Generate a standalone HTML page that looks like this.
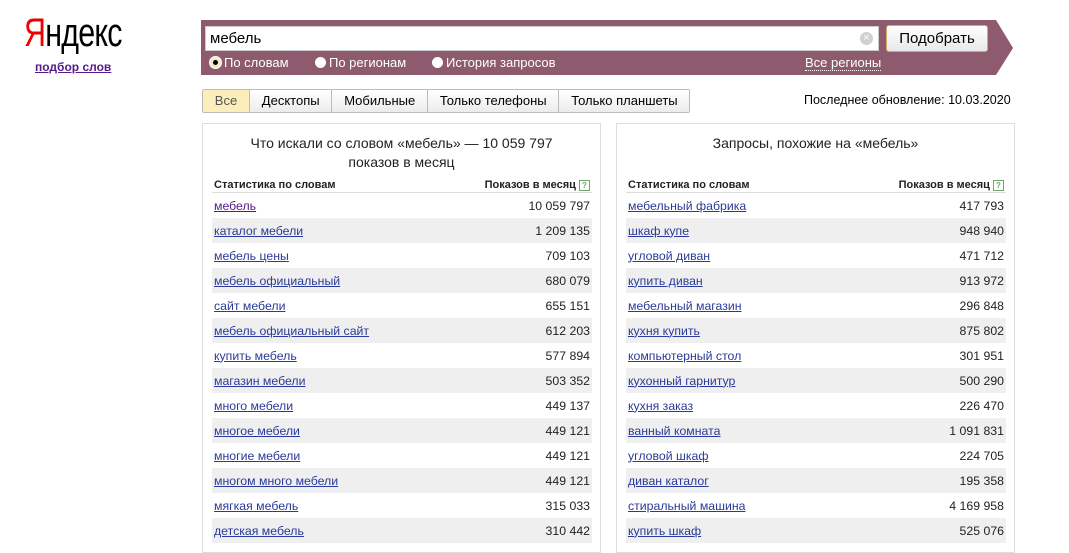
<!DOCTYPE html>
<html><head><meta charset="utf-8"><style>
body{margin:0;width:1069px;height:545px;overflow:hidden;background:#fff;font-family:"Liberation Sans",Arial,sans-serif;position:relative}
.abs{position:absolute}
a{color:#2a3a9a;text-decoration:underline}
.logo{left:24px;top:11px;font-size:40px;color:#000;letter-spacing:-1px;transform:scaleX(.76);transform-origin:left top;font-weight:normal}
.logo span{color:#e00}
.sub{left:35px;top:60px;font-size:12px;font-weight:bold;color:#551a8b;text-decoration:underline}
.bar{left:201px;top:20px;width:812px;height:55px;background:#8e5a6d;clip-path:polygon(0 0,795px 0,812px 28px,795px 55px,0 55px)}
.inp{left:205px;top:26px;width:674px;height:25px;background:#fff;border:1px solid #ccc;box-sizing:border-box;font-size:15px;padding:3px 4px}
.clr{left:860px;top:32px;width:13px;height:13px;border-radius:50%;background:#d0d0d0;color:#fff;font-size:11px;line-height:13px;text-align:center}
.btn{left:886px;top:25px;width:102px;height:27px;box-sizing:border-box;border:1px solid #d8a870;border-radius:3px;background:linear-gradient(#fff,#e8e8e8);font-size:15px;text-align:center;line-height:25px}
.rad{top:55px;font-size:13px;color:#fff}
.rad i{display:inline-block;width:11px;height:11px;border-radius:50%;background:#fff;vertical-align:-1px;margin-right:3px;box-sizing:border-box}
.rad i.on{border:3px solid #f5e6c8;background:#000;box-shadow:0 0 0 1px #fff}
.allr{left:805px;top:55px;font-size:13px;color:#fff;border-bottom:1px dotted #fff}
.tabs{left:202px;top:89px;height:22px;display:flex;border:1px solid #bbb;border-radius:2px;font-size:13px}
.tabs div{padding:0 11.8px;line-height:21px;background:linear-gradient(#fff,#ececec);border-left:1px solid #bbb}
.tabs div:first-child{border-left:0;background:#fbeeba;color:#555}
.upd{left:804px;top:93px;font-size:12.5px}
.panel{top:123px;width:399px;height:430px;border:1px solid #ddd;box-sizing:border-box}
.ttl{position:absolute;left:0;right:0;top:10px;text-align:center;font-size:14px;line-height:19px;color:#222}
table{position:absolute;left:9px;top:55px;width:380px;border-collapse:collapse;font-size:12.3px;color:#222}
th{font-size:11px;text-align:left;height:13px;border-bottom:1px solid #ddd;padding:0 2px;vertical-align:top}
th.r{text-align:right}
td{height:25px;padding:0 2px}
td.r{text-align:right}
tr:nth-child(odd) td{background:#efefef}
.q{display:inline-block;width:9px;height:9px;border:1px solid #6a6;font-size:8px;line-height:9px;text-align:center;color:#6a6;vertical-align:0}
</style></head><body>
<div class="abs logo"><span>Я</span>ндекс</div>
<div class="abs sub">подбор слов</div>
<div class="abs bar"></div>
<div class="abs inp">мебель</div>
<div class="abs clr">×</div>
<div class="abs btn">Подобрать</div>
<div class="abs rad" style="left:210px"><i class="on"></i>По словам</div>
<div class="abs rad" style="left:315px"><i></i>По регионам</div>
<div class="abs rad" style="left:432px"><i></i>История запросов</div>
<div class="abs allr">Все регионы</div>
<div class="abs tabs"><div>Все</div><div>Десктопы</div><div>Мобильные</div><div>Только телефоны</div><div>Только планшеты</div></div>
<div class="abs upd">Последнее обновление: 10.03.2020</div>
<div class="abs panel" style="left:202px"><div class="ttl">Что искали со словом «мебель» — 10 059 797<br>показов в месяц</div>
<table><tr><th>Статистика по словам</th><th class="r">Показов в месяц <span class="q">?</span></th></tr>
<tr><td><a style="color:#551a8b">мебель</a></td><td class="r">10 059 797</td></tr>
<tr><td><a>каталог мебели</a></td><td class="r">1 209 135</td></tr>
<tr><td><a>мебель цены</a></td><td class="r">709 103</td></tr>
<tr><td><a>мебель официальный</a></td><td class="r">680 079</td></tr>
<tr><td><a>сайт мебели</a></td><td class="r">655 151</td></tr>
<tr><td><a>мебель официальный сайт</a></td><td class="r">612 203</td></tr>
<tr><td><a>купить мебель</a></td><td class="r">577 894</td></tr>
<tr><td><a>магазин мебели</a></td><td class="r">503 352</td></tr>
<tr><td><a>много мебели</a></td><td class="r">449 137</td></tr>
<tr><td><a>многое мебели</a></td><td class="r">449 121</td></tr>
<tr><td><a>многие мебели</a></td><td class="r">449 121</td></tr>
<tr><td><a>многом много мебели</a></td><td class="r">449 121</td></tr>
<tr><td><a>мягкая мебель</a></td><td class="r">315 033</td></tr>
<tr><td><a>детская мебель</a></td><td class="r">310 442</td></tr>
</table></div>
<div class="abs panel" style="left:616px"><div class="ttl">Запросы, похожие на «мебель»</div>
<table><tr><th>Статистика по словам</th><th class="r">Показов в месяц <span class="q">?</span></th></tr>
<tr><td><a>мебельный фабрика</a></td><td class="r">417 793</td></tr>
<tr><td><a>шкаф купе</a></td><td class="r">948 940</td></tr>
<tr><td><a>угловой диван</a></td><td class="r">471 712</td></tr>
<tr><td><a>купить диван</a></td><td class="r">913 972</td></tr>
<tr><td><a>мебельный магазин</a></td><td class="r">296 848</td></tr>
<tr><td><a>кухня купить</a></td><td class="r">875 802</td></tr>
<tr><td><a>компьютерный стол</a></td><td class="r">301 951</td></tr>
<tr><td><a>кухонный гарнитур</a></td><td class="r">500 290</td></tr>
<tr><td><a>кухня заказ</a></td><td class="r">226 470</td></tr>
<tr><td><a>ванный комната</a></td><td class="r">1 091 831</td></tr>
<tr><td><a>угловой шкаф</a></td><td class="r">224 705</td></tr>
<tr><td><a>диван каталог</a></td><td class="r">195 358</td></tr>
<tr><td><a>стиральный машина</a></td><td class="r">4 169 958</td></tr>
<tr><td><a>купить шкаф</a></td><td class="r">525 076</td></tr>
</table></div>
</body></html>
